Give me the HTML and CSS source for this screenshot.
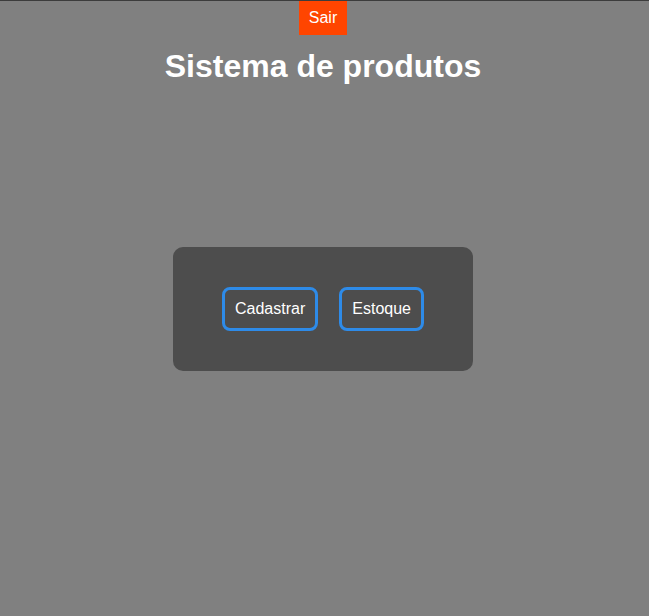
FILE: index.html
```html
<!DOCTYPE html>
<html lang="pt">
<head>
<meta charset="utf-8">
<title>Sistema de produtos</title>
<link rel="stylesheet" href="styles.css">
</head>
<body>
<div class="page">
  <header class="top">
    <button class="logout">Sair</button>
    <h1 class="title">Sistema de produtos</h1>
  </header>
  <main class="main">
    <div class="card">
      <button class="action">Cadastrar</button>
      <button class="action">Estoque</button>
    </div>
  </main>
</div>
</body>
</html>
```
FILE: styles.css
```css
html, body {
  margin: 0;
  padding: 0;
}
body {
  background: #808080;
  border-top: 1px solid #3c3c3c;
  font-family: "Liberation Sans", Arial, sans-serif;
  color: #fff;
  min-height: 615px;
}
.page {
  width: 646px;
  display: flex;
  flex-direction: column;
  align-items: center;
}
.top {
  display: flex;
  flex-direction: column;
  align-items: center;
}
.logout {
  background: #ff4500;
  color: #fff;
  border: none;
  font-family: inherit;
  font-size: 16px;
  line-height: 18px;
  padding: 8px 10px 8px;
  height: 35px;
  margin-top: -1px;
  cursor: pointer;
}
.title {
  margin: 13px 0 0;
  font-size: 32px;
  font-weight: bold;
  line-height: 37px;
}
.main {
  display: flex;
  justify-content: center;
}
.card {
  margin-top: 162px;
  width: 300px;
  height: 124px;
  box-sizing: border-box;
  background: #4d4d4d;
  border-radius: 10px;
  display: flex;
  align-items: center;
  justify-content: center;
  gap: 21px;
}
.action {
  background: transparent;
  color: #fff;
  border: 3px solid #2e8be8;
  border-radius: 8px;
  font-family: inherit;
  font-size: 16px;
  line-height: 19px;
  padding: 9px 10px 10px;
  cursor: pointer;
}
```
